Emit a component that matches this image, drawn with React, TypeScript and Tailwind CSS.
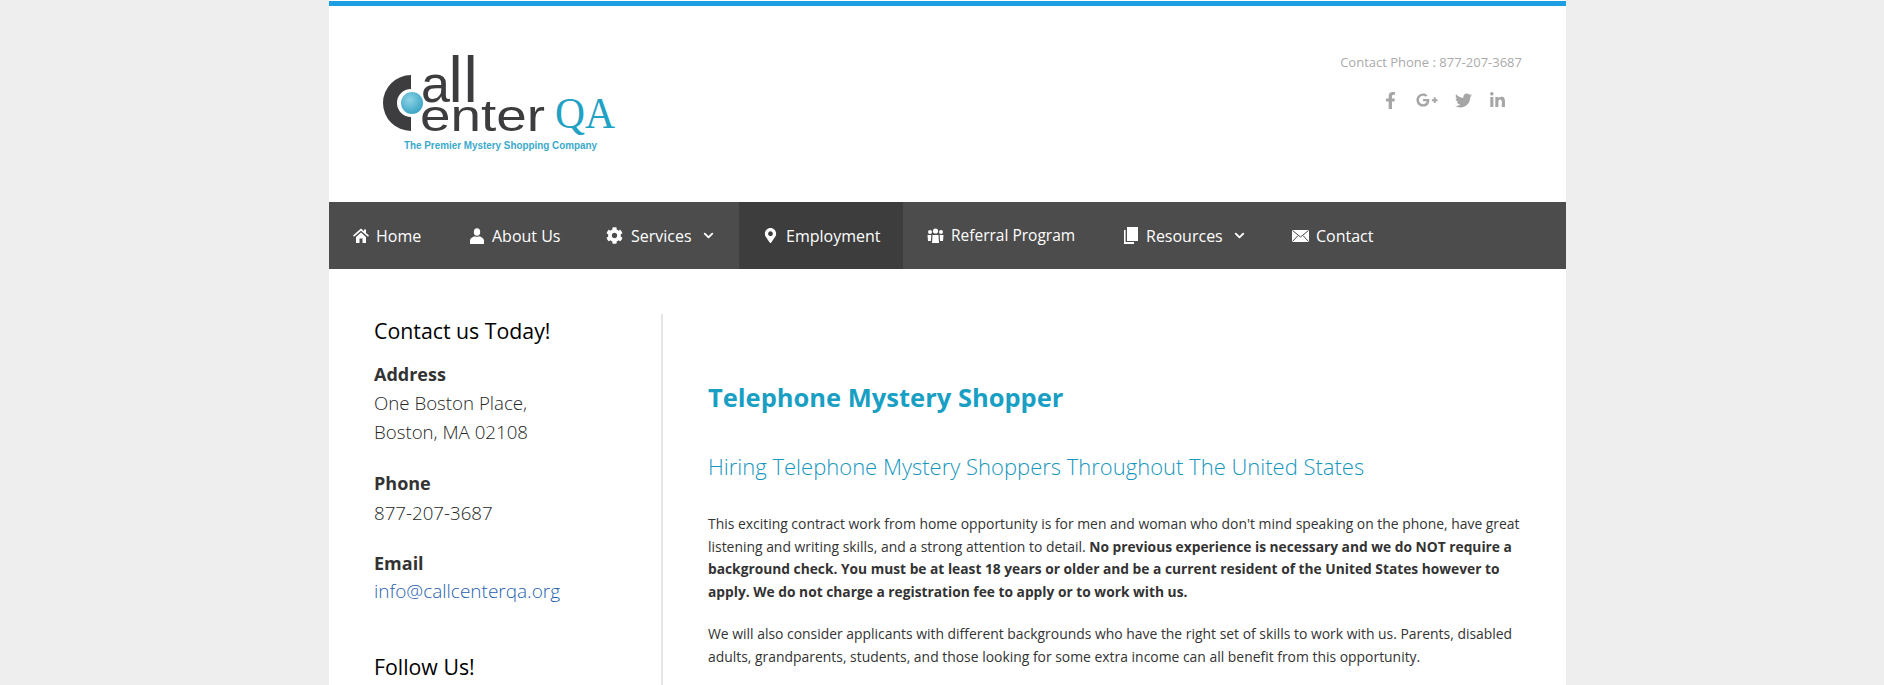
import React from "react";
import { FaCog, FaMapMarkerAlt, FaFacebookF, FaGooglePlusG, FaTwitter, FaLinkedinIn } from "react-icons/fa";
import { FiChevronDown } from "react-icons/fi";

// Logo: the C is a shape, the letters stay real text
function Logo() {
  return (
    <svg width="240" height="110" viewBox="0 0 240 110" className="block overflow-visible">
      <defs>
        <radialGradient id="ball" cx="40%" cy="35%" r="75%">
          <stop offset="0%" stopColor="#8fd3e6" />
          <stop offset="100%" stopColor="#2f9fc0" />
        </radialGradient>
      </defs>
      <path d="M31 20 A28 28 0 0 0 31 76 L31 62 A14 14 0 0 1 31 34 Z" fill="#3d3d40" />
      <circle cx="32" cy="48" r="11" fill="url(#ball)" />
      <text y="47" fontFamily="Liberation Sans" fill="#3d3d40">
        <tspan x="41" fontSize="52">a</tspan>
        <tspan x="68.5" fontSize="64">l</tspan>
        <tspan x="83.5" fontSize="64">l</tspan>
      </text>
      <text x="40" y="76" fontFamily="Liberation Sans" fontSize="44" fill="#3d3d40" textLength="125" lengthAdjust="spacingAndGlyphs">enter</text>
      <text x="175" y="73" fontFamily="Liberation Serif" fontSize="45" fill="#1fa2c4" textLength="60" lengthAdjust="spacingAndGlyphs">QA</text>
      <text x="24" y="94" fontFamily="Liberation Sans" fontWeight="bold" fontSize="10.5" fill="#3aa9cb" textLength="193" lengthAdjust="spacingAndGlyphs">The Premier Mystery Shopping Company</text>
    </svg>
  );
}

function HomeIcon() {
  return (
    <svg width="16" height="15" viewBox="0 0 16 15" fill="white">
      <path d="M8 0.5 L0 7.5 L1 8.8 L8 2.8 L15 8.8 L16 7.5 L13 4.9 V1.5 H11 V3.2 Z" />
      <path d="M3 9 L8 4.6 L13 9 V15 H9.5 V10.5 H6.5 V15 H3 Z" />
    </svg>
  );
}

function UserIcon() {
  return (
    <svg width="16" height="16" viewBox="0 0 16 16" fill="white">
      <ellipse cx="8" cy="4" rx="3.2" ry="3.8" />
      <path d="M1 16 V12.5 C1 10 4 8.8 6 8.2 C7 9 9 9 10 8.2 C12 8.8 15 10 15 12.5 V16 Z" />
    </svg>
  );
}

function UsersIcon() {
  return (
    <svg width="17" height="15" viewBox="0 0 17 15" fill="white">
      <circle cx="8.5" cy="3" r="2.6" />
      <circle cx="3" cy="4" r="2" />
      <circle cx="14" cy="4" r="2" />
      <path d="M5.5 7 H11.5 L12 15 H5 Z" />
      <path d="M0.5 7 H4.3 L3.9 13 H1 Z" />
      <path d="M12.7 7 H16.5 L16 13 H13.1 Z" />
    </svg>
  );
}

function BookIcon() {
  return (
    <svg width="15" height="17" viewBox="0 0 15 17" fill="white">
      <rect x="4" y="0" width="11" height="14" />
      <path d="M1 3 H2.6 V15 H11 V17 H1 Z" />
    </svg>
  );
}

function MailIcon() {
  return (
    <svg width="17" height="12" viewBox="0 0 17 12">
      <rect width="17" height="12" fill="white" />
      <path d="M0.5 0.5 L8.5 7 L16.5 0.5 M0.5 11.5 L6 5.5 M16.5 11.5 L11 5.5" stroke="#4c4c4c" strokeWidth="1" fill="none" />
    </svg>
  );
}

const navItems = [
  { label: "Home", icon: <HomeIcon />, w: "w-[116px]", box: "w-[23px]" },
  { label: "About Us", icon: <UserIcon />, w: "w-[137px]", box: "w-[23px]" },
  { label: "Services", icon: <FaCog size={17} />, arrow: true, w: "w-[157px]", box: "w-[25px]" },
  { label: "Employment", icon: <FaMapMarkerAlt size={15} />, active: true, w: "w-[164px]", box: "w-[23px]" },
  { label: "Referral Program", icon: <UsersIcon />, w: "w-[196px]", box: "w-[24px]", text: "text-[15.5px]" },
  { label: "Resources", icon: <BookIcon />, arrow: true, w: "w-[169px]", box: "w-[23px]" },
  { label: "Contact", icon: <MailIcon />, w: "", box: "w-[24px]" },
];

export default function App() {
  return (
    <div className="h-[685px] overflow-hidden bg-[#eeeeee] font-['Open_Sans',sans-serif]">
      <div className="ml-[329px] w-[1237px] h-full bg-white pt-px">
        <div className="h-[5px] bg-[#1b9fe2]" />

        {/* Header */}
        <div className="h-[196px] flex justify-between">
          <div className="pl-[51px] pt-[49px]">
            <Logo />
          </div>
          <div className="pr-[44px] pt-[46px] flex flex-col items-end">
            <div className="text-[13px] leading-5 text-[#aaaaaa]">Contact Phone : 877-207-3687</div>
            <div className="mt-[17px] mr-[16px] flex items-center gap-[17px] text-[#a6a6a6] text-[17px]">
              <FaFacebookF />
              <FaGooglePlusG size={22} />
              <FaTwitter />
              <FaLinkedinIn />
            </div>
          </div>
        </div>

        {/* Nav */}
        <nav className="h-[67px] bg-[#4c4c4c] flex items-stretch text-white text-[16px]">
          {navItems.map((item) => (
            <div
              key={item.label}
              className={`flex items-center pl-[24px] ${item.w} ${item.active ? "bg-[#3d3d3d]" : ""}`}
            >
              <span className={`flex items-center ${item.box}`}>{item.icon}</span>
              <span className={item.text}>{item.label}</span>
              {item.arrow && <FiChevronDown size={15} strokeWidth={3} className="ml-[9px]" />}
            </div>
          ))}
        </nav>

        <div className="flex pt-[45px]">
          {/* Sidebar */}
          <aside className="w-[334px] h-[371px] pl-[45px] border-r-2 border-[#e5e5e5] text-[18px] text-[#333333]">
            <h3 className="text-[21.3px] leading-[33px] text-black">Contact us Today!</h3>
            <div className="mt-[13px] font-bold leading-[29px]">Address</div>
            <div className="leading-[29px] -mt-px font-light text-[18.7px] text-[#262626]">One Boston Place,<br />Boston, MA 02108</div>
            <div className="mt-[23px] font-bold leading-[29px]">Phone</div>
            <div className="leading-[29px] font-light text-[18.7px] text-[#262626]">877-207-3687</div>
            <div className="mt-[22px] font-bold leading-[29px]">Email</div>
            <a className="block -mt-px leading-[28px] font-light text-[19px] text-[#1f5fb0]">info@callcenterqa.org</a>
            <h3 className="mt-[45px] text-[21.3px] leading-[33px] text-black">Follow Us!</h3>
            <div className="mt-[2px] flex gap-[12px]">
              {[0, 1, 2, 3].map((i) => (
                <span key={i} className="w-[36px] h-[36px] rounded-full bg-[#666666]" />
              ))}
            </div>
          </aside>

          {/* Main */}
          <main className="pl-[45px] pr-[40px] flex-1 text-[13.92px] text-[#333333]">
            <h1 className="mt-[65px] text-[25.5px] leading-[36px] font-bold text-[#1a9fc4]">Telephone Mystery Shopper</h1>
            <h2 className="mt-[33px] text-[22px] leading-[36px] font-light text-[#1796bd]">Hiring Telephone Mystery Shoppers Throughout The United States</h2>
            <p className="mt-[29px] leading-[22.5px]">
              This exciting contract work from home opportunity is for men and woman who don't mind speaking on the phone, have great listening and writing skills, and a strong attention to detail.{" "}
              <b className="text-[13.78px]">No previous experience is necessary and we do NOT require a background check. You must be at least 18 years or older and be a current resident of the United States however to apply. We do not charge a registration fee to apply or to work with us.</b>
            </p>
            <p className="mt-[20px] leading-[22.5px]">
              We will also consider applicants with different backgrounds who have the right set of skills to work with us. Parents, disabled adults, grandparents, students, and those looking for some extra income can all benefit from this opportunity.
            </p>
          </main>
        </div>
      </div>
    </div>
  );
}
